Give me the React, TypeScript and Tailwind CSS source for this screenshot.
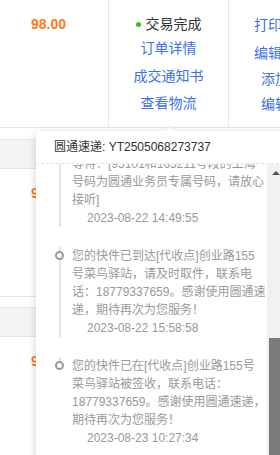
import React from "react";

type Item = { lines: string[]; time: string };

const items: Item[] = [
  {
    lines: [
      "【上海市】快件派送中，请耐心",
      "等待：[95101和165211号段的上海",
      "号码为圆通业务员专属号码，请放心",
      "接听]",
    ],
    time: "2023-08-22 14:49:55",
  },
  {
    lines: [
      "您的快件已到达[代收点]创业路155",
      "号菜鸟驿站，请及时取件，联系电",
      "话：18779337659。感谢使用圆通速",
      "递，期待再次为您服务！",
    ],
    time: "2023-08-22 15:58:58",
  },
  {
    lines: [
      "您的快件已在[代收点]创业路155号",
      "菜鸟驿站被签收，联系电话：",
      "18779337659。感谢使用圆通速递，",
      "期待再次为您服务！",
    ],
    time: "2023-08-23 10:27:34",
  },
];

function OrderRow({ full }: { full?: boolean }) {
  return (
    <div className="flex h-[128px] border-b border-[#e8e8e8]">
      <div className="w-[109px] shrink-0 border-r border-[#e8e8e8] pl-[31px] pt-[14px]">
        <span className="text-[14px] leading-[20px] font-bold text-[#ff7a1c]">98.00</span>
      </div>
      <div className="w-[120px] shrink-0 border-r border-[#e8e8e8] flex flex-col items-center text-[14px] leading-[20px]">
        {full && (
          <>
            <div className="mt-[14px] flex items-center text-[#333]">
              <span className="w-[5px] h-[5px] rounded-full bg-[#3cc01a] mr-[5px]" />
              交易完成
            </div>
            <span className="mt-[4px] text-[#3d6fe8]">订单详情</span>
            <span className="mt-[8px] text-[#3d6fe8]">成交通知书</span>
            <span className="mt-[7px] text-[#3d6fe8]">查看物流</span>
          </>
        )}
      </div>
      <div className="w-[120px] shrink-0 flex flex-col items-center text-[14px] leading-[20px] text-[#3d6fe8]">
        {full && (
          <>
            <span className="mt-[15px]">打印发货单</span>
            <span className="mt-[8px]">编辑发货单</span>
            <span className="mt-[6px]">添加备注</span>
            <span className="mt-[5px]">编辑标记</span>
          </>
        )}
      </div>
    </div>
  );
}

function CardHeader() {
  return <div className="h-[30px] border-y border-[#e8e8e8] bg-[#f5f5f5]" />;
}

export default function App() {
  return (
    <div className="relative w-[280px] h-[455px] overflow-hidden bg-white font-['Liberation_Sans','Noto_Sans_CJK_SC',sans-serif] text-[12px]">
      <OrderRow full />
      <div className="mt-[11px]">
        <CardHeader />
        <OrderRow />
      </div>
      <div className="mt-[10px]">
        <CardHeader />
        <OrderRow />
      </div>

      {/* popover */}
      <div className="absolute left-[36px] top-[131px] w-[248px] h-[340px] bg-white rounded-[4px] shadow-[0_2px_10px_rgba(0,0,0,0.18)] flex flex-col">
        <div className="absolute top-[-3px] left-[130px] w-[7px] h-[7px] rotate-45 bg-white shadow-[-1px_-1px_2px_rgba(0,0,0,0.08)]" />
        <div className="relative h-[33px] shrink-0 flex items-center pl-[18px] text-[#333] border-b border-dashed border-[#e3e3e3] bg-white rounded-t-[4px]">
          圆通速递: YT2505068273737
        </div>
        <div className="flex flex-1 min-h-0">
          <div className="flex-1 overflow-hidden">
            <div className="mt-[-27px] pl-[18px]">
              {items.map((it, i) => {
                const last = i === items.length - 1;
                return (
                  <div key={i} className={"flex gap-[7px] " + (last ? "" : "pb-[20px]")}>
                    <div className="w-[11px] shrink-0 flex flex-col items-center">
                      <div className="h-[4px] w-[2px] bg-[#e4e4e4]" />
                      <div className="w-[9px] h-[9px] shrink-0 rounded-full border-2 border-[#999] bg-white" />
                      {!last && <div className="flex-1 w-[2px] bg-[#e4e4e4]" />}
                    </div>
                    <div className="flex-1 text-[12px] leading-[18px] text-[#999]">
                      {it.lines.map((l, j) => (
                        <div key={j} className="whitespace-nowrap">
                          {l}
                        </div>
                      ))}
                      <div className="whitespace-nowrap pl-[15px]">{it.time}</div>
                    </div>
                  </div>
                );
              })}
            </div>
          </div>
          <div className="w-[17px] shrink-0 bg-[#f1f1f1] flex flex-col items-center">
            <div className="mt-[7px] w-0 h-0 border-x-[4px] border-x-transparent border-b-[4px] border-b-[#505050]" />
            <div className="mt-[163px] self-stretch mx-[2px] h-[200px] bg-[#7b7b7b]" />
          </div>
        </div>
      </div>
    </div>
  );
}
